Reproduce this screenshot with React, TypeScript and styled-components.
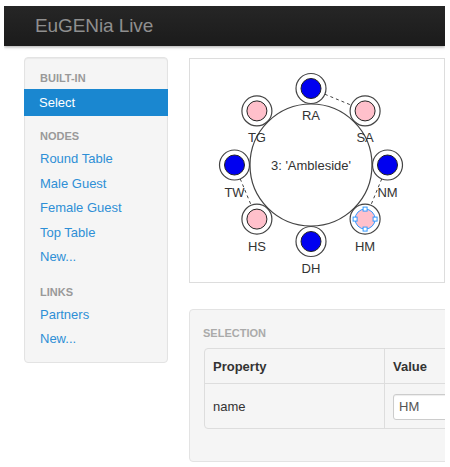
import styled, { createGlobalStyle } from 'styled-components';

const GlobalStyle = createGlobalStyle`
  body {
    margin: 0;
    background: #fff;
    font-family: 'Liberation Sans', Arial, sans-serif;
  }
`;

const Frame = styled.div`
  margin: 6px 0 0 4px;
  width: 441px;
  height: 461px;
  overflow: hidden;
`;

const Navbar = styled.div`
  height: 40px;
  display: flex;
  align-items: center;
  padding-left: 31px;
  background: linear-gradient(#262626, #1b1b1b);
  box-shadow: 0 1px 3px rgba(0, 0, 0, 0.35);
`;

const Brand = styled.span`
  font-size: 19px;
  color: #8f8f8f;
  letter-spacing: -0.1px;
`;

const Body = styled.div`
  display: flex;
  align-items: flex-start;
  gap: 21px;
  padding: 11px 0 0 20px;
`;

const Sidebar = styled.nav`
  width: 144px;
  flex-shrink: 0;
  box-sizing: border-box;
  background: #f5f5f5;
  border: 1px solid #e3e3e3;
  border-radius: 4px;
  box-shadow: inset 0 1px 1px rgba(0, 0, 0, 0.05);
  padding: 10px 0;
`;

const NavHeader = styled.div<{ $gap?: number }>`
  height: 21px;
  line-height: 21px;
  margin-top: ${(p) => p.$gap || 0}px;
  padding: 0 15px;
  font-size: 11px;
  font-weight: bold;
  color: #999;
  text-transform: uppercase;
`;

const NavItem = styled.a<{ $active?: boolean }>`
  display: block;
  height: ${(p) => (p.$active ? 27 : 24.5)}px;
  line-height: ${(p) => (p.$active ? 27 : 24.5)}px;
  padding: 0 15px;
  margin: ${(p) => (p.$active ? '0 -1px' : '0')};
  font-size: 13px;
  text-decoration: none;
  color: ${(p) => (p.$active ? '#fff' : '#2e8fd6')};
  background: ${(p) => (p.$active ? '#1a87d0' : 'transparent')};
  cursor: pointer;
`;

const MainColumn = styled.div`
  width: 256px;
  flex-shrink: 0;
  display: flex;
  flex-direction: column;
  gap: 26px;
  margin-top: 1px;
`;

const Canvas = styled.div`
  box-sizing: border-box;
  height: 225px;
  background: #fff;
  border: 1px solid #ddd;
`;

const SelectionPanel = styled.div`
  box-sizing: border-box;
  width: 300px;
  height: 153px;
  background: #f5f5f5;
  border: 1px solid #e3e3e3;
  border-radius: 4px;
  padding: 13px 14px 0;
`;

const PanelLabel = styled.div`
  height: 20px;
  line-height: 20px;
  font-size: 11px;
  font-weight: bold;
  color: #aaa;
  margin-left: -1px;
  margin-bottom: 5px;
`;

const Table = styled.table`
  width: 320px;
  table-layout: fixed;
  border-collapse: separate;
  border-spacing: 0;
  border: 1px solid #ddd;
  border-radius: 4px;
  font-size: 13px;
  color: #333;
`;

const HeadCell = styled.th<{ $first?: boolean }>`
  height: 34px;
  padding: 0 8px;
  text-align: left;
  font-weight: bold;
  border-left: ${(p) => (p.$first ? 'none' : '1px solid #ddd')};
  width: ${(p) => (p.$first ? '163px' : 'auto')};
`;

const Cell = styled.td<{ $first?: boolean }>`
  height: 44px;
  padding: 0 8px;
  border-top: 1px solid #ddd;
  border-left: ${(p) => (p.$first ? 'none' : '1px solid #ddd')};
`;

const ValueInput = styled.input`
  box-sizing: border-box;
  display: block;
  width: 100px;
  height: 26px;
  margin-top: 1px;
  padding: 0 5px;
  border: 1px solid #ccc;
  border-radius: 3px;
  background: #fff;
  font-family: 'Liberation Sans', Arial, sans-serif;
  font-size: 13px;
  color: #555;
  box-shadow: inset 0 1px 1px rgba(0, 0, 0, 0.075);
`;

const CX = 121;
const CY = 106;
const SEAT_R = 76.5;

const guests = [
  { name: 'RA', male: true },
  { name: 'SA', male: false },
  { name: 'NM', male: true },
  { name: 'HM', male: false, selected: true },
  { name: 'DH', male: true },
  { name: 'HS', male: false },
  { name: 'TW', male: true },
  { name: 'TG', male: false },
].map((g, i) => {
  const a = ((-90 + i * 45) * Math.PI) / 180;
  return { ...g, x: CX + SEAT_R * Math.cos(a), y: CY + SEAT_R * Math.sin(a) };
});

const partners: [string, string][] = [
  ['RA', 'SA'],
  ['TW', 'HS'],
  ['NM', 'HM'],
];

function Diagram() {
  const find = (n: string) => guests.find((g) => g.name === n)!;
  return (
    <svg width="254" height="223" style={{ display: 'block' }}>
      {partners.map(([a, b]) => {
        const p = find(a);
        const q = find(b);
        const dx = q.x - p.x;
        const dy = q.y - p.y;
        const len = Math.hypot(dx, dy);
        const ux = dx / len;
        const uy = dy / len;
        return (
          <line
            key={a + b}
            x1={p.x + ux * 15}
            y1={p.y + uy * 15}
            x2={q.x - ux * 15}
            y2={q.y - uy * 15}
            stroke="#444"
            strokeWidth="1"
            strokeDasharray="3 3"
          />
        );
      })}
      <circle cx={CX} cy={CY} r="61" fill="#fff" stroke="#444" strokeWidth="1.2" />
      <text x={CX} y={CY + 4.5} textAnchor="middle" fontSize="13" fill="#333" fontFamily="Liberation Sans, Arial, sans-serif">
        3: 'Ambleside'
      </text>
      {guests.map((g) => (
        <g key={g.name}>
          <circle cx={g.x} cy={g.y} r="15" fill="#fff" stroke="#444" strokeWidth="1.2" />
          <circle
            cx={g.x}
            cy={g.y}
            r="10"
            fill={g.male ? '#0000f0' : '#ffc0cb'}
            stroke={g.selected ? '#3399ff' : '#222'}
            strokeWidth="1"
          />
          {g.selected &&
            [
              [0, -10],
              [10, 0],
              [0, 10],
              [-10, 0],
            ].map(([hx, hy]) => (
              <rect
                key={`${hx}${hy}`}
                x={g.x + hx - 2}
                y={g.y + hy - 2}
                width="4"
                height="4"
                fill="#fff"
                stroke="#3399ff"
                strokeWidth="1"
              />
            ))}
          <text
            x={g.x}
            y={g.y + 31.5}
            textAnchor="middle"
            fontSize="13"
            fill="#333"
            fontFamily="Liberation Sans, Arial, sans-serif"
          >
            {g.name}
          </text>
        </g>
      ))}
    </svg>
  );
}

export default function App() {
  return (
    <>
      <GlobalStyle />
      <Frame>
        <Navbar>
          <Brand>EuGENia Live</Brand>
        </Navbar>
        <Body>
          <Sidebar>
            <NavHeader>Built-in</NavHeader>
            <NavItem $active>Select</NavItem>
            <NavHeader $gap={10}>Nodes</NavHeader>
            <NavItem>Round Table</NavItem>
            <NavItem>Male Guest</NavItem>
            <NavItem>Female Guest</NavItem>
            <NavItem>Top Table</NavItem>
            <NavItem>New...</NavItem>
            <NavHeader $gap={12}>Links</NavHeader>
            <NavItem>Partners</NavItem>
            <NavItem>New...</NavItem>
          </Sidebar>
          <MainColumn>
            <Canvas>
              <Diagram />
            </Canvas>
            <SelectionPanel>
              <PanelLabel>SELECTION</PanelLabel>
              <Table>
                <thead>
                  <tr>
                    <HeadCell $first>Property</HeadCell>
                    <HeadCell>Value</HeadCell>
                  </tr>
                </thead>
                <tbody>
                  <tr>
                    <Cell $first>name</Cell>
                    <Cell>
                      <ValueInput defaultValue="HM" />
                    </Cell>
                  </tr>
                </tbody>
              </Table>
            </SelectionPanel>
          </MainColumn>
        </Body>
      </Frame>
    </>
  );
}
